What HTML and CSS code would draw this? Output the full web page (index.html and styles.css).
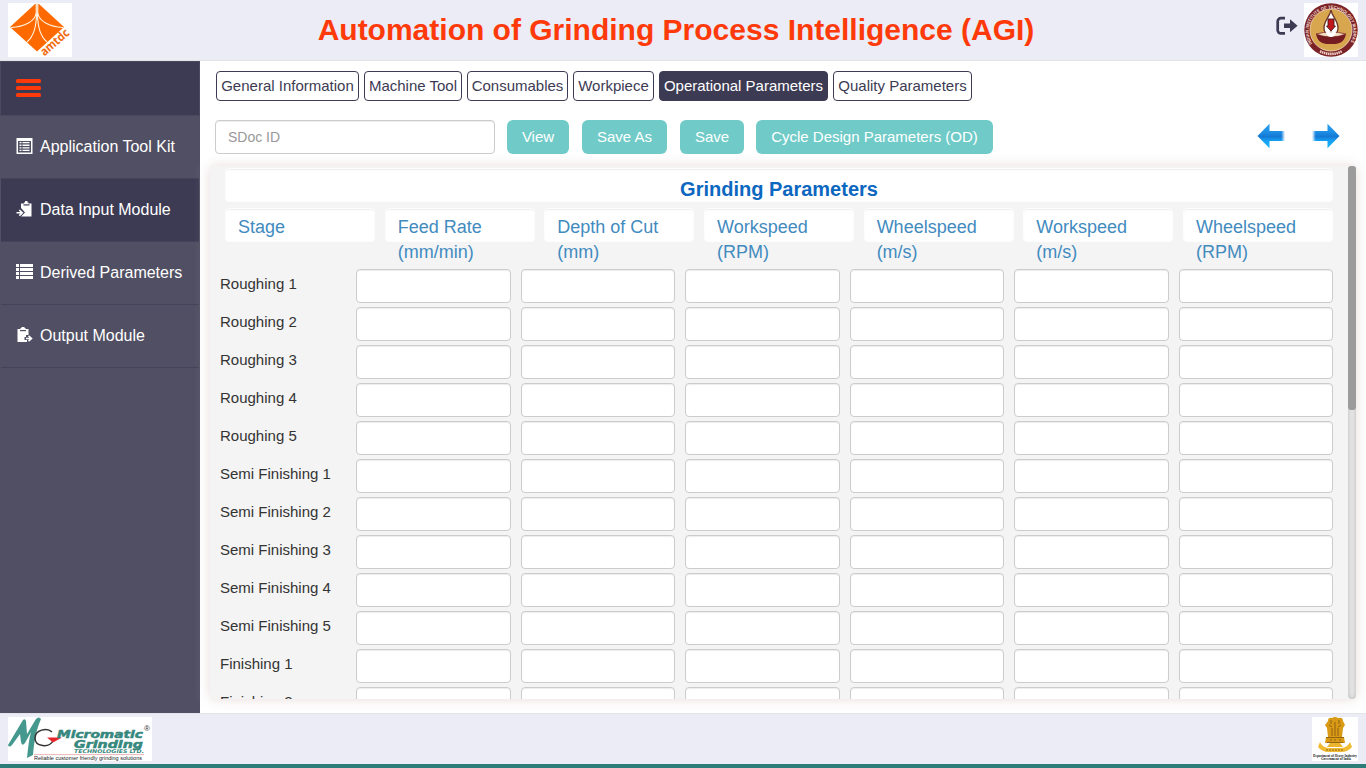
FILE: index.html
```html
<!DOCTYPE html>
<html lang="en">
<head>
<meta charset="utf-8">
<title>Automation of Grinding Process Intelligence (AGI)</title>
<link rel="stylesheet" href="styles.css">
</head>
<body>
<header class="topbar">
  <svg class="logo-amtdc" width="64" height="54" viewBox="0 0 64 54">
    <rect width="64" height="54" fill="#fff"/>
    <path d="M27 1H31L56 24L29 48.500L2 24Z" fill="#ff6a00"/>
    <g fill="none" stroke="#fff3df" stroke-width="1.100">
      <path d="M28.200 0V10C27 18 17 24 3 24.500"/>
      <path d="M29.800 0V10C31 18 41 24 55 24.500"/>
      <path d="M28.500 10C28.500 24 25 34 19 39"/>
      <path d="M29.500 10C29.500 24 33 34 39 39"/>
    </g>
    <path d="M28.600 0h.8v17h-.8z" fill="#fff3df"/>
    <text class="amtdc-text" transform="translate(36.500 53.500) rotate(-41)" textLength="34" lengthAdjust="spacingAndGlyphs">amtdc</text>
  </svg>
  <h1 class="title">Automation of Grinding Process Intelligence (AGI)</h1>
  <div class="topbar-right">
    <svg width="22" height="20" viewBox="0 0 22 20">
      <path d="M9 2.200H5A3.200 3.200 0 0 0 1.700 5.500v8.600A3.200 3.200 0 0 0 5 17.400H9" fill="none" stroke="#3d3b53" stroke-width="2.700"/>
      <path d="M8 7.500h6V3.300L21.600 9.800L14 16.300V12H8Z" fill="#3d3b53"/>
    </svg>
    <svg width="54" height="54" viewBox="0 0 54 54">
      <defs>
        <path id="sealTop" d="M8.500 40.500A22.300 22.300 0 1 1 45.500 40.500"/>
      </defs>
      <rect width="54" height="54" fill="#fff"/>
      <circle cx="27" cy="27" r="26.700" fill="#7b2226"/>
      <circle cx="27" cy="27" r="21" fill="#d7a64e" stroke="#f1dcc0" stroke-width=".8"/>
      <text class="seal-text"><textPath href="#sealTop" textLength="94" lengthAdjust="spacingAndGlyphs">INDIAN INSTITUTE OF TECHNOLOGY MADRAS</textPath></text>
      <path d="M16 48.300Q27 53.500 38 48.300" fill="none" stroke="#f0d0c6" stroke-width="2.600" stroke-dasharray="1.500 .6"/>
      <path d="M27 7C26 14 20 17 20 25C20 29 22 32 27 33C32 32 34 29 34 25C34 17 28 14 27 7Z" fill="#fff" stroke="#6b3229" stroke-width="1.300"/>
      <path d="M24 16h6v7h1.500l-4.500 5l-4.500-5h1.500Z" fill="#c2151b" stroke="#431b1b" stroke-width=".9"/>
      <path d="M12 31Q27 36 42 31C40 42 31 41 27 41S14 42 12 31Z" fill="#741c22"/>
      <path d="M12 31Q27 27 42 31Q27 37 12 31Z" fill="#f0dec2" stroke="#741c22" stroke-width=".7"/>
      <path d="M22 24C21 31 24 34 27 34S33 31 32 24L27 30Z" fill="#fff"/>
    </svg>
  </div>
</header>

<div class="body">
  <nav class="sidebar">
    <div class="menu-toggle"><span></span><span></span><span></span></div>
    <a class="nav-item">
      <svg width="16" height="16" viewBox="0 0 16 16"><path fill="#fff" fill-rule="evenodd" d="M0 0h16v16H0zM1.500 3v11.500h13V3z"/><path fill="#fff" d="M3 4h2v1.300H3zM6 4h7v1.300H6zM3 6.600h2v1.300H3zM6 6.600h7v1.300H6zM3 9.200h2v1.300H3zM6 9.200h7v1.300H6zM3 11.800h2v1.200H3zM6 11.800h7v1.200H6z"/></svg>
      <span>Application Tool Kit</span>
    </a>
    <a class="nav-item active">
      <svg width="16" height="16" viewBox="0 0 16 16"><path fill="#fff" d="M4.500 2.500H7.500V1.500H8.500V0H11V1.500H12V2.500H15V15.500H4.500L8.500 11.500L4.500 7Z"/><path fill="#3d3b53" d="M7 3.300h6v1.200H7z"/><path d="M0 11.800H5M2.800 9L5.800 11.800L2.800 14.600" fill="none" stroke="#fff" stroke-width="1.600"/></svg>
      <span>Data Input Module</span>
    </a>
    <a class="nav-item">
      <svg width="17" height="16" viewBox="0 0 17 16"><path fill="#fff" d="M0 0h3v3H0zM4 0h13v3H4zM0 4h3v3H0zM4 4h13v3H4zM0 8h3v3H0zM4 8h13v3H4zM0 12h3v3H0zM4 12h13v3H4z"/></svg>
      <span>Derived Parameters</span>
    </a>
    <a class="nav-item">
      <svg width="16" height="16" viewBox="0 0 16 16"><path fill="#fff" d="M1 2H4V1H5V0H8V1H9V2H12V8H9.500V10H8V13H10.500V15H1Z"/><path fill="#514f63" d="M3.500 3h6v1.200h-6z"/><path d="M9.500 11.500H14M12 8.800L15 11.500L12 14.200" fill="none" stroke="#fff" stroke-width="1.600"/></svg>
      <span>Output Module</span>
    </a>
  </nav>

  <main class="main">
    <div class="tabs">
      <button class="tab tab-general">General Information</button>
      <button class="tab tab-machine">Machine Tool</button>
      <button class="tab tab-consumables">Consumables</button>
      <button class="tab tab-workpiece">Workpiece</button>
      <button class="tab tab-operational selected">Operational Parameters</button>
      <button class="tab tab-quality">Quality Parameters</button>
    </div>
    <div class="toolbar">
      <input class="field doc-id" placeholder="SDoc ID">
      <button class="action action-view">View</button>
      <button class="action action-save-as">Save As</button>
      <button class="action action-save">Save</button>
      <button class="action action-cycle">Cycle Design Parameters (OD)</button>
      <div class="pager">
        <svg width="28" height="26" viewBox="0 0 28 26"><use href="#arrow" transform="translate(28 0) scale(-1 1)"/></svg>
        <svg width="28" height="26" viewBox="0 0 28 26">
          <defs>
            <linearGradient id="blue" gradientUnits="userSpaceOnUse" x1="0" y1="1" x2="0" y2="25"><stop offset="0" stop-color="#2aa2f0"/><stop offset=".35" stop-color="#1c8ce4"/><stop offset=".52" stop-color="#1478d4"/><stop offset=".7" stop-color="#16a0f2"/><stop offset="1" stop-color="#19b8ff"/></linearGradient>
            <linearGradient id="fade" x1="0" y1="0" x2="1" y2="0"><stop offset="0" stop-color="#fff"/><stop offset=".25" stop-color="#fff" stop-opacity="0"/></linearGradient>
          </defs>
          <g id="arrow"><path d="M0 8H15.500V.8L27.500 13L15.500 25.200V18H0Z" fill="url(#blue)"/><path d="M0 7.500H15V18.500H0Z" fill="url(#fade)"/></g>
        </svg>
      </div>
    </div>

    <section class="panel">
      <div class="panel-content">
        <h2 class="panel-title">Grinding Parameters</h2>
        <div class="heads">
          <div class="head">Stage</div>
          <div class="head">Feed Rate (mm/min)</div>
          <div class="head">Depth of Cut (mm)</div>
          <div class="head">Workspeed (RPM)</div>
          <div class="head">Wheelspeed (m/s)</div>
          <div class="head">Workspeed (m/s)</div>
          <div class="head">Wheelspeed (RPM)</div>
        </div>
        <div class="rows">
          <div class="row"><label>Roughing 1</label><input class="field"><input class="field"><input class="field"><input class="field"><input class="field"><input class="field"></div>
          <div class="row"><label>Roughing 2</label><input class="field"><input class="field"><input class="field"><input class="field"><input class="field"><input class="field"></div>
          <div class="row"><label>Roughing 3</label><input class="field"><input class="field"><input class="field"><input class="field"><input class="field"><input class="field"></div>
          <div class="row"><label>Roughing 4</label><input class="field"><input class="field"><input class="field"><input class="field"><input class="field"><input class="field"></div>
          <div class="row"><label>Roughing 5</label><input class="field"><input class="field"><input class="field"><input class="field"><input class="field"><input class="field"></div>
          <div class="row"><label>Semi Finishing 1</label><input class="field"><input class="field"><input class="field"><input class="field"><input class="field"><input class="field"></div>
          <div class="row"><label>Semi Finishing 2</label><input class="field"><input class="field"><input class="field"><input class="field"><input class="field"><input class="field"></div>
          <div class="row"><label>Semi Finishing 3</label><input class="field"><input class="field"><input class="field"><input class="field"><input class="field"><input class="field"></div>
          <div class="row"><label>Semi Finishing 4</label><input class="field"><input class="field"><input class="field"><input class="field"><input class="field"><input class="field"></div>
          <div class="row"><label>Semi Finishing 5</label><input class="field"><input class="field"><input class="field"><input class="field"><input class="field"><input class="field"></div>
          <div class="row"><label>Finishing 1</label><input class="field"><input class="field"><input class="field"><input class="field"><input class="field"><input class="field"></div>
          <div class="row"><label>Finishing 2</label><input class="field"><input class="field"><input class="field"><input class="field"><input class="field"><input class="field"></div>
        </div>
      </div>
      <div class="scroll-track"><div class="scroll-thumb"></div></div>
    </section>
  </main>
</div>

<footer class="footer">
  <svg width="144" height="44" viewBox="0 0 144 44">
    <rect width="144" height="44" fill="#fff"/>
    <path d="M0 28L15 3Q17 1 18 4L19 17L28 2Q31-1 33 2C28 13 26 26 25 38L19 41C20 31 21 22 23 15L17 26Q14 30 13 25L12 17L4 28Q1 31 0 28Z" fill="#45988d"/>
    <path d="M44 15C39 10 27 13 27 21C27 30 41 31 45 24" fill="none" stroke="#333" stroke-width="1.500"/>
    <path d="M39 20.500H54L45 25.500Z" fill="#e5262b"/>
    <text class="mg-name" x="49" y="20.500" textLength="86" lengthAdjust="spacingAndGlyphs">Micromatic</text>
    <text class="mg-name" x="66" y="30.500" textLength="69" lengthAdjust="spacingAndGlyphs">Grinding</text>
    <text class="mg-tech" x="66" y="36.200" textLength="70" lengthAdjust="spacingAndGlyphs">TECHNOLOGIES LTD.</text>
    <text class="mg-reg" x="136" y="13.500">®</text>
    <path d="M26 37.600H136" stroke="#e7a2a2" stroke-width=".8"/>
    <text class="mg-tag" x="26" y="42.500" textLength="108" lengthAdjust="spacingAndGlyphs">Reliable customer friendly grinding solutions</text>
  </svg>
  <svg width="46" height="44" viewBox="0 0 46 44">
    <rect width="46" height="44" fill="#fff"/>
    <g fill="#d99a16">
      <path d="M16 4Q16 0 20 1Q23-1 26 1Q31 0 31 4L33 8L31 11L30 20H16L15 11L13 8Z"/>
      <path d="M14 20H32L33 26H13Z"/>
      <path d="M18 26H28L31 30H15Z" fill="#edb52d"/>
      <path d="M8 25Q10 30 16 31H30Q36 30 38 25L40 30Q36 35 29 35H17Q10 35 6 30Z" fill="#f0ba32"/>
    </g>
    <g fill="none" stroke="#8a5c10" stroke-width=".9">
      <path d="M19 3v4M27 3v4M17 8l3 2M29 8l-3 2M20 11v8M26 11v8M23 5v14M14 20.500H32M15 25.500H31M18 23h2M22 23h2M27 23h2"/>
      <path d="M14 33H32" stroke-dasharray="2 1"/>
    </g>
    <text class="emblem-text" x="1" y="39.500" textLength="44" lengthAdjust="spacingAndGlyphs">Department of Heavy Industry</text>
    <text class="emblem-text" x="9" y="43" textLength="30" lengthAdjust="spacingAndGlyphs">Government of India</text>
  </svg>
</footer>
</body>
</html>
```
FILE: styles.css
```css
* { box-sizing: border-box; }
body {
  margin: 0;
  width: 1366px;
  height: 768px;
  overflow: hidden;
  display: flex;
  flex-direction: column;
  background: #fff;
  color: #333;
  font-family: "Liberation Sans", Arial, sans-serif;
  font-size: 15px;
}
svg { display: block; flex: none; }
h1, h2 { margin: 0; }
input, button { font: inherit; }

.topbar {
  height: 61px;
  flex: none;
  display: flex;
  align-items: flex-start;
  justify-content: space-between;
  padding: 3px 8px 0;
  background: #ebecf5;
  border-bottom: 1px solid #e3e3e3;
}
.title {
  margin-left: 4px;
  padding-top: 9px;
  font-size: 30px;
  line-height: 36px;
  color: #ff3a0a;
  white-space: nowrap;
}
.topbar-right { display: flex; gap: 6px; }
.topbar-right svg:first-child { margin-top: 13px; }
.amtdc-text { font: bold 12px "Noto Sans", sans-serif; fill: #f26a0c; }
.seal-text { font: bold 4.6px "Liberation Sans", sans-serif; fill: #f5dcd2; }

.body { height: 652px; flex: none; display: flex; }
.sidebar { width: 200px; flex: none; background: #514f63; }
.menu-toggle {
  height: 55px;
  border: 1px solid #4a485e;
  background: #3d3b53;
  padding: 17px 15px;
  display: flex;
  flex-direction: column;
  gap: 3px;
}
.menu-toggle span { width: 25px; height: 4px; border-radius: 1.5px; background: #ff3a0a; }
.nav-item {
  height: 63px;
  margin: 0 1px;
  padding: 0 0 2px 15px;
  display: flex;
  align-items: center;
  gap: 7px;
  border-bottom: 1px solid #454259;
  color: #fff;
  font-size: 16px;
}
.nav-item svg { width: 17px; }
.nav-item span { padding-top: 2px; }
.nav-item.active { background: #3d3b53; }

.main { width: 1166px; padding: 10px 10px 0; }
.tabs { display: flex; gap: 5px; padding-left: 6px; }
.tab {
  height: 30px;
  padding: 0 0 2px;
  border: 1px solid #3d3b53;
  border-radius: 4px;
  background: #fff;
  color: #3d3b53;
  white-space: nowrap;
}
.tab.selected { background: #3d3b53; color: #fff; }
.tab-general { width: 143px; }
.tab-machine { width: 98px; }
.tab-consumables { width: 101px; }
.tab-workpiece { width: 81px; }
.tab-operational { width: 169px; }
.tab-quality { width: 139px; }

.toolbar { display: flex; padding: 19px 16px 0 5px; }
.field {
  height: 34px;
  min-width: 0;
  padding: 6px 12px;
  border: 1px solid #ccc;
  border-radius: 4px;
  background: #fff;
  box-shadow: inset 0 1px 1px rgba(0, 0, 0, .075);
}
.doc-id { width: 280px; font-size: 14px; }
.doc-id::placeholder { color: #999; }
.action {
  height: 34px;
  margin-left: 12px;
  padding: 0 0 2px;
  border: 0;
  border-radius: 6px;
  background: #70cbc8;
  color: #fff;
}
.action-view { width: 62px; }
.action-save-as { width: 85px; margin-left: 13px; }
.action-save { width: 64px; margin-left: 13px; }
.action-cycle { width: 237px; }
.pager { display: flex; gap: 27px; margin: 3px 0 0 auto; }

.panel {
  width: 1146px;
  height: 533px;
  margin-top: 12px;
  display: flex;
  background: #f4f4f4;
  box-shadow: 0 0 12px #e9dcdc;
  overflow: hidden;
}
.panel-content { width: 1138px; padding: 2px 15px 0 10px; }
.panel-title, .head {
  height: 34px;
  margin-left: 5px;
  border: 1px solid #fdfdfd;
  border-radius: 4px;
  background: #fff;
  box-shadow: inset 0 1px 1px rgba(0, 0, 0, .075);
}
.panel-title {
  font-size: 20px;
  line-height: 40px;
  text-align: center;
  color: #0c67c0;
}
.heads {
  display: grid;
  grid-template-columns: repeat(7, minmax(0, 1fr));
  gap: 9.6px;
  margin: 6px 0 27px 5px;
}
.head {
  margin: 0;
  padding: 6px 12px;
  font-size: 18px;
  line-height: 25px;
  color: #428bbf;
}
.rows { display: flex; flex-direction: column; gap: 4px; }
.row {
  display: grid;
  grid-template-columns: 126px repeat(6, minmax(0, 1fr));
  column-gap: 10px;
}
.row label { line-height: 30px; white-space: nowrap; }
.scroll-track {
  width: 8px;
  background: #e5e5e5;
  border-radius: 4px;
  box-shadow: inset 0 0 4px rgba(0, 0, 0, .2);
}
.scroll-thumb { height: 244px; background: #9c9c9c; border-radius: 3px; }

.footer {
  height: 55px;
  flex: none;
  display: flex;
  justify-content: space-between;
  align-items: flex-start;
  padding: 3px 8px 0;
  background: #ebecf5;
  border-top: 1px solid #e3e3e8;
  border-bottom: 4px solid #2c7c77;
}
.mg-name { font: italic bold 11px "DejaVu Sans", sans-serif; fill: #36877d; stroke: #36877d; stroke-width: .5px; }
.mg-tech { font: italic bold 5px "DejaVu Sans", sans-serif; fill: #36877d; }
.mg-reg { font: 8px "Liberation Sans", sans-serif; fill: #333; }
.mg-tag { font: 5.5px "Liberation Sans", sans-serif; fill: #222; }
.emblem-text { font: bold 3.5px "Liberation Serif", serif; fill: #222; }
```
